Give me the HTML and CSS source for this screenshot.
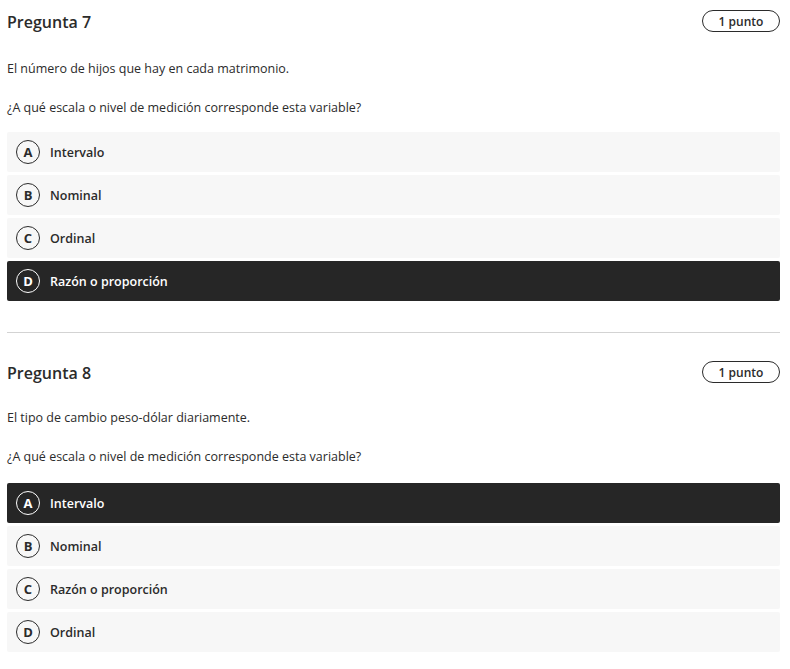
FILE: index.html
```html
<!DOCTYPE html>
<html lang="es">
<head>
<meta charset="utf-8">
<title>Preguntas</title>
<link rel="stylesheet" href="styles.css">
</head>
<body>
<div class="page">
  <section class="question">
    <div class="q-head">
      <h2 class="q-title">Pregunta 7</h2>
      <span class="pill">1 punto</span>
    </div>
    <p class="q-text first">El número de hijos que hay en cada matrimonio.</p>
    <p class="q-text">¿A qué escala o nivel de medición corresponde esta variable?</p>
    <ul class="options">
      <li class="option"><span class="letter">A</span><span class="label">Intervalo</span></li>
      <li class="option"><span class="letter">B</span><span class="label">Nominal</span></li>
      <li class="option"><span class="letter">C</span><span class="label">Ordinal</span></li>
      <li class="option selected"><span class="letter">D</span><span class="label">Razón o proporción</span></li>
    </ul>
  </section>
  <hr class="divider">
  <section class="question second">
    <div class="q-head">
      <h2 class="q-title">Pregunta 8</h2>
      <span class="pill">1 punto</span>
    </div>
    <p class="q-text first">El tipo de cambio peso-dólar diariamente.</p>
    <p class="q-text">¿A qué escala o nivel de medición corresponde esta variable?</p>
    <ul class="options">
      <li class="option selected"><span class="letter">A</span><span class="label">Intervalo</span></li>
      <li class="option"><span class="letter">B</span><span class="label">Nominal</span></li>
      <li class="option"><span class="letter">C</span><span class="label">Razón o proporción</span></li>
      <li class="option"><span class="letter">D</span><span class="label">Ordinal</span></li>
    </ul>
  </section>
</div>
</body>
</html>
```

FILE: styles.css
```css
* { box-sizing: border-box; }
html, body { margin: 0; padding: 0; background: #fff; }
body {
  font-family: "Open Sans", "Noto Sans", sans-serif;
  color: #2b2b2b;
}
.page {
  width: 773px;
  margin-left: 7px;
  padding-top: 10px;
}
.q-head {
  display: flex;
  align-items: center;
  justify-content: space-between;
  height: 22px;
}
.q-title {
  margin: 2px 0 0;
  font-size: 16px;
  font-weight: 600;
  color: #2b2b2b;
  line-height: 22px;
}
.pill {
  display: inline-flex;
  align-items: center;
  justify-content: center;
  width: 78px;
  height: 22px;
  border: 1px solid #2b2b2b;
  border-radius: 11px;
  font-size: 12px;
  font-weight: 600;
}
.q-text {
  margin: 19px 0 0;
  font-size: 12.5px;
  line-height: 20px;
}
.q-text.first { margin-top: 27px; }
.options {
  list-style: none;
  margin: 14px 0 0;
  padding: 0;
  display: flex;
  flex-direction: column;
  gap: 3px;
}
.option {
  display: flex;
  align-items: center;
  height: 40px;
  padding-left: 9px;
  background: #f7f7f7;
  border-radius: 2px;
}
.option.selected {
  background: #262626;
  color: #fff;
}
.letter {
  display: inline-flex;
  align-items: center;
  justify-content: center;
  width: 24px;
  height: 24px;
  border: 1px solid #2b2b2b;
  border-radius: 50%;
  font-size: 13px;
  font-weight: 700;
  margin-right: 10px;
}
.selected .letter { border-color: #fff; }
.label {
  font-size: 12.5px;
  font-weight: 600;
}
.divider {
  margin: 31px 0 0;
  border: 0;
  border-top: 1px solid #d3d3d3;
  height: 0;
}
.second { padding-top: 28px; }
.second .q-text.first { margin-top: 25px; }
.second .options { margin-top: 16px; }
```
